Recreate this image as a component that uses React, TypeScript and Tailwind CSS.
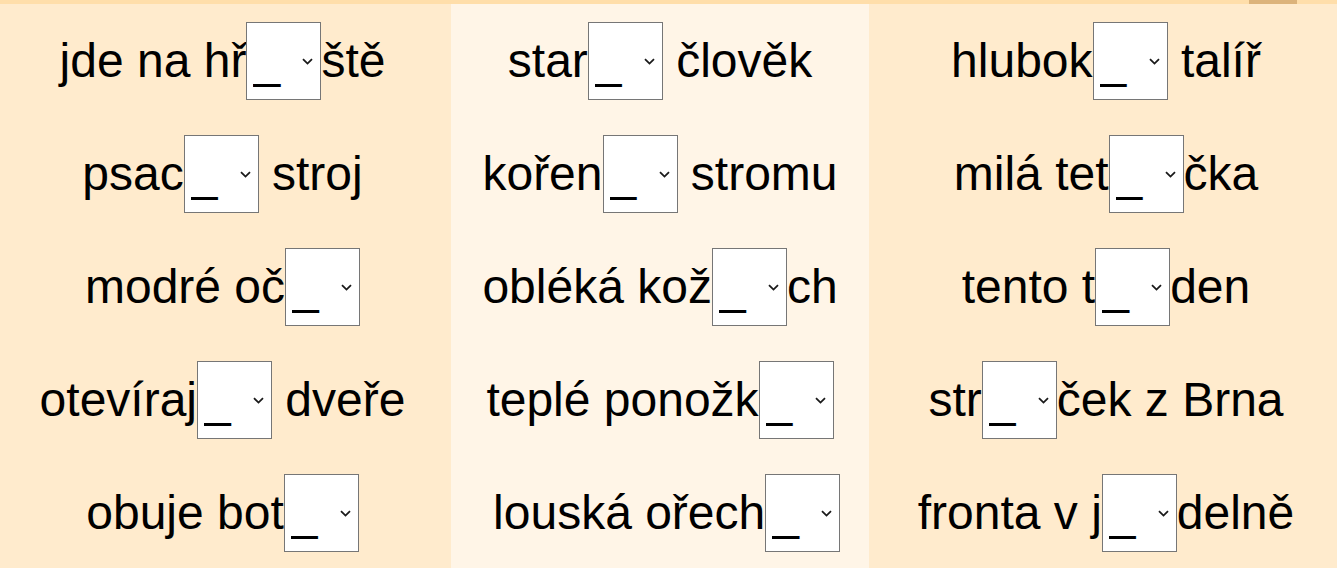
import React from 'react';

type Item = { before: string; after: string };

const columns: Item[][] = [
  [
    { before: 'jde na hř', after: 'ště' },
    { before: 'psac', after: ' stroj' },
    { before: 'modré oč', after: '' },
    { before: 'otevíraj', after: ' dveře' },
    { before: 'obuje bot', after: '' },
  ],
  [
    { before: 'star', after: ' člověk' },
    { before: 'kořen', after: ' stromu' },
    { before: 'obléká kož', after: 'ch' },
    { before: 'teplé ponožk', after: '' },
    { before: '\u00a0louská ořech', after: '' },
  ],
  [
    { before: 'hlubok', after: ' talíř' },
    { before: 'milá tet', after: 'čka' },
    { before: 'tento t', after: 'den' },
    { before: 'str', after: 'ček z Brna' },
    { before: 'fronta v j', after: 'delně' },
  ],
];

function Blank() {
  return (
    <span className="relative inline-block align-baseline">
      <select
        defaultValue="_"
        className="block h-[78px] w-[75px] appearance-none border border-[#767676] bg-white pl-[6px] text-[48px] text-black outline-none"
      >
        <option value="_">_</option>
        <option value="i">i</option>
        <option value="y">y</option>
        <option value="í">í</option>
        <option value="ý">ý</option>
      </select>
      <svg
        viewBox="0 0 11 7"
        className="pointer-events-none absolute right-[8px] top-[36px] h-[7px] w-[11px]"
        fill="none"
        stroke="#1a1a1a"
        strokeWidth="1.8"
      >
        <path d="M1 1.2 L5.5 5.6 L10 1.2" />
      </svg>
    </span>
  );
}

export default function App() {
  const colStyles = [
    'w-[451px] bg-[#ffebcd] pr-[6px]',
    'w-[418px] bg-[#fff5e7]',
    'flex-1 bg-[#ffebcd] pl-[6px]',
  ];

  return (
    <div className="h-[568px] w-full overflow-hidden bg-[#ffebcd] font-['Liberation_Sans',Arial,sans-serif] text-black">
      {/* top strip */}
      <div className="flex h-[4px] bg-[#ffdeaa]">
        <div className="w-[1249px]" />
        <div className="w-[48px] bg-[#dcb37b]" />
      </div>

      <div className="flex">
        {columns.map((col, ci) => (
          <div key={ci} className={colStyles[ci]}>
            {col.map((item, ri) => (
              <div key={ri} className="flex h-[113px] items-center justify-center">
                <div className="whitespace-pre text-[48px] leading-normal">
                  {item.before}
                  <Blank />
                  {item.after}
                </div>
              </div>
            ))}
          </div>
        ))}
      </div>
    </div>
  );
}
